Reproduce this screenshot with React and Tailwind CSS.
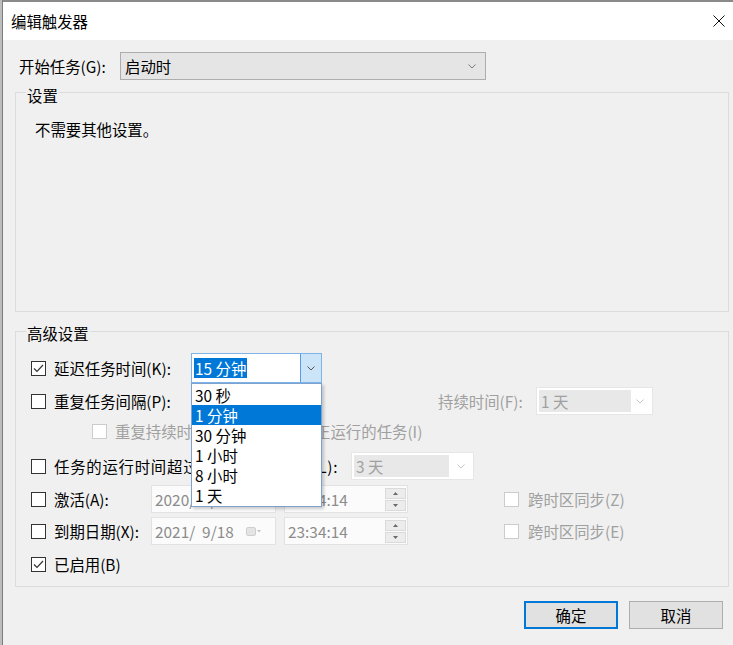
const Chevron = ({ color = '#7a7a7a' }) => (
  <svg width="8" height="5" viewBox="0 0 8 5">
    <path d="M0.5 0.5 L4 4 L7.5 0.5" fill="none" stroke={color} strokeWidth="1" />
  </svg>
);

const CheckBox = ({ checked, disabled }) => (
  <div
    className={`w-[15px] h-[15px] shrink-0 border bg-white flex items-center justify-center ${
      disabled ? 'border-[#cccccc]' : 'border-[#333333]'
    }`}
  >
    {checked && (
      <svg width="11" height="9" viewBox="0 0 11 9">
        <path d="M1 4.5 L4 7.5 L10 1" fill="none" stroke="#333" strokeWidth="1.2" />
      </svg>
    )}
  </div>
);

const DisabledCombo = ({ value, boxClass, innerClass }) => (
  <div className={`h-[28px] bg-white border border-[#e6e6e6] flex items-center pl-[2px] pr-[8px] ${boxClass}`}>
    <div className={`h-[22px] bg-[#e8e8e8] text-[#a0a0a0] leading-[22px] pl-[2px] ${innerClass}`}>{value}</div>
    <div className="flex-1 flex justify-end">
      <Chevron color="#c4c4c4" />
    </div>
  </div>
);

const CalendarIcon = () => (
  <svg width="16" height="10" viewBox="0 0 16 10">
    <rect x="0.5" y="1.5" width="9" height="8" rx="1.5" fill="#e4e4e4" stroke="#cfcfcf" />
    <path d="M11 4 L15 4 L13 6.5 Z" fill="#c4c4c4" />
  </svg>
);

const DateBox = ({ value }) => (
  <div className="w-[125px] h-[28px] bg-[#fbfbfb] border border-[#e2e2e2] flex items-center pl-[3px] pr-[13px] text-[#8c8c8c]">
    <span className="flex-1 whitespace-pre">{value}</span>
    <CalendarIcon />
  </div>
);

const TimeBox = ({ value }) => (
  <div className="w-[124px] h-[28px] ml-[8px] bg-[#fbfbfb] border border-[#e2e2e2] flex items-center pl-[3px] pr-[1px] text-[#8c8c8c]">
    <span className="flex-1">{value}</span>
    <div className="flex flex-col gap-[1px]">
      <div className="w-[21px] h-[11px] bg-[#ececec] border border-[#dadada] flex items-center justify-center">
        <svg width="5" height="3" viewBox="0 0 5 3"><path d="M0 3 L2.5 0 L5 3 Z" fill="#6a6a6a" /></svg>
      </div>
      <div className="w-[21px] h-[11px] bg-[#ececec] border border-[#dadada] flex items-center justify-center">
        <svg width="5" height="3" viewBox="0 0 5 3"><path d="M0 0 L2.5 3 L5 0 Z" fill="#6a6a6a" /></svg>
      </div>
    </div>
  </div>
);

const delayOptions = ['30 秒', '1 分钟', '30 分钟', '1 小时', '8 小时', '1 天'];

export default function App() {
  return (
    <div className="w-[733px] h-[645px] flex overflow-hidden text-[15.4px] leading-[18px] text-black font-['Noto_Sans_CJK_SC',sans-serif]">
      <div className="w-[3px] bg-[#bdbdbd] border-r border-[#7d7d7d]" />
      <div className="flex-1 flex flex-col border-t-2 border-[#8a8a8a]">
        {/* title bar */}
        <div className="h-[38px] bg-white flex items-center justify-between pl-[8px] pr-[8px]">
          <span>编辑触发器</span>
          <svg width="12" height="12" viewBox="0 0 12 12">
            <path d="M0.5 0.5 L11.5 11.5 M11.5 0.5 L0.5 11.5" stroke="#111" strokeWidth="1" />
          </svg>
        </div>

        <div className="flex-1 bg-[#f0f0f0] flex flex-col pt-[12px]">
          <div className="flex items-center h-[28px] pl-[16px]">
            <span className="w-[101px]">开始任务(G):</span>
            <div className="w-[366px] h-[28px] bg-[#e5e5e5] border border-[#adadad] flex items-center pl-[4px] pr-[9px]">
              <span className="flex-1">启动时</span>
              <Chevron />
            </div>
          </div>

          {/* settings group */}
          <div className="relative mt-[12px] ml-[12px] w-[714px] h-[220px] border border-[#dcdcdc]">
            <span className="absolute left-[10px] top-[-7px] bg-[#f0f0f0] px-[1px]">设置</span>
            <div className="pt-[27px] pl-[19px]">不需要其他设置。</div>
          </div>

          {/* advanced group */}
          <div className="relative mt-[19px] ml-[12px] w-[714px] h-[256px] border border-[#dcdcdc] flex flex-col pl-[15px] pt-[21px]">
            <span className="absolute left-[10px] top-[-8px] bg-[#f0f0f0] px-[1px]">高级设置</span>

            <div className="flex items-center h-[30px]">
              <CheckBox checked />
              <span className="ml-[8px] w-[137px]">延迟任务时间(K):</span>
              <div className="relative w-[131px] h-[30px] bg-white border border-[#7eb4ea] flex items-center">
                <span className="ml-[2px] h-[20px] leading-[20px] bg-[#0078d7] text-white px-[1px]">15 分钟</span>
                <div className="ml-auto w-[21px] h-full bg-[#cce4f7] border-l border-[#569de5] flex items-center justify-center">
                  <Chevron color="#555" />
                </div>
                <div className="absolute left-[-1px] top-[29px] w-[131px] z-10 bg-white border border-[#7da2ce] py-[1px] shadow-[2px_2px_3px_rgba(0,0,0,0.2)]">
                  {delayOptions.map((opt, i) => (
                    <div
                      key={opt}
                      className={`h-[20px] leading-[20px] pl-[3px] ${i === 1 ? 'bg-[#0078d7] text-white' : ''}`}
                    >
                      {opt}
                    </div>
                  ))}
                </div>
              </div>
            </div>

            <div className="flex items-center h-[30px] mt-[3px]">
              <CheckBox />
              <span className="ml-[8px] w-[384px]">重复任务间隔(P):</span>
              <span className="w-[98px] text-[#a0a0a0]">持续时间(F):</span>
              <DisabledCombo value="1 天" boxClass="w-[117px]" innerClass="w-[92px]" />
            </div>

            <div className="flex items-center h-[20px] mt-[5px] pl-[61px]">
              <CheckBox disabled />
              <span className="ml-[8px] text-[#a0a0a0] whitespace-nowrap">重复持续时间结束时停止所有正运行的任务(I)</span>
            </div>

            <div className="flex items-center h-[30px] mt-[10px]">
              <CheckBox />
              <span className="ml-[8px] w-[297px] whitespace-nowrap tracking-[0.75px]">任务的运行时间超过以下时间则停止(L):</span>
              <DisabledCombo value="3 天" boxClass="w-[123px]" innerClass="w-[95px]" />
            </div>

            <div className="flex items-center h-[28px] mt-[4px]">
              <CheckBox />
              <span className="ml-[8px] w-[97px]">激活(A):</span>
              <DateBox value="2020/  9/18" />
              <TimeBox value="23:34:14" />
              <div className="ml-[96px]">
                <CheckBox disabled />
              </div>
              <span className="ml-[9px] text-[#a0a0a0]">跨时区同步(Z)</span>
            </div>

            <div className="flex items-center h-[28px] mt-[4px]">
              <CheckBox />
              <span className="ml-[8px] w-[97px]">到期日期(X):</span>
              <DateBox value="2021/  9/18" />
              <TimeBox value="23:34:14" />
              <div className="ml-[96px]">
                <CheckBox disabled />
              </div>
              <span className="ml-[9px] text-[#a0a0a0]">跨时区同步(E)</span>
            </div>

            <div className="flex items-center h-[20px] mt-[9px]">
              <CheckBox checked />
              <span className="ml-[8px]">已启用(B)</span>
            </div>
          </div>

          <div className="flex justify-end gap-[11px] pr-[10px] mt-[14px]">
            <button className="w-[94px] h-[28px] bg-[#e1e1e1] border-2 border-[#0078d7] flex items-center justify-center">
              确定
            </button>
            <button className="w-[94px] h-[28px] bg-[#e1e1e1] border border-[#adadad] flex items-center justify-center">
              取消
            </button>
          </div>
        </div>
      </div>
    </div>
  );
}
